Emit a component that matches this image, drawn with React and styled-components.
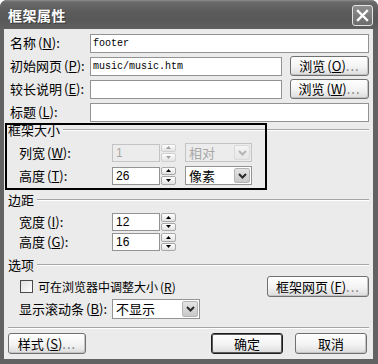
import React from 'react';
import styled, { createGlobalStyle } from 'styled-components';

const GlobalStyle = createGlobalStyle`
  html, body { margin: 0; padding: 0; background: #ffffff; }
  body { font-family: "Noto Sans CJK SC", "Noto Sans", sans-serif; color: #000; }
  * { box-sizing: border-box; }
`;

const Window = styled.div`
  width: 378px;
  height: 364px;
  display: flex;
  flex-direction: column;
  background: #626262;
  border-radius: 7px 7px 0 0;
  overflow: hidden;
`;

const TitleBar = styled.div`
  height: 29px;
  flex: none;
  display: flex;
  align-items: center;
  justify-content: space-between;
  padding: 1px 5px 0 8px;
  background: linear-gradient(#8c8c8c 0px, #6a6a6a 2px, #5b5b5b 40%, #585858 70%, #606060 100%);
`;

const Title = styled.div`
  color: #fff;
  font-size: 14px;
  font-weight: 700;
  line-height: 16px;
  letter-spacing: 0.5px;
  text-shadow: 1px 1px 0 #3a3a3a;
`;

const CloseButton = styled.div`
  width: 21px;
  height: 21px;
  border: 1px solid #e4e4e4;
  border-radius: 3px;
  background: linear-gradient(#8e8e8e, #6c6c6c);
  display: flex;
  align-items: center;
  justify-content: center;
`;

const Body = styled.div`
  flex: 1;
  margin: 0 5px 5px 4px;
  background: #ebebeb;
  padding: 4px 4px 0 4px;
  display: flex;
  flex-direction: column;
  font-size: 13px;
  line-height: 14px;
`;

const Fields = styled.div`
  display: flex;
  flex-direction: column;
  gap: 3px;
`;

const FieldRow = styled.div`
  display: flex;
  align-items: center;
  height: 20px;
`;

const Label = styled.div`
  width: ${p => p.$w}px;
  flex: none;
  padding-left: 2px;
  white-space: nowrap;
`;

const Paren = styled.span`
  margin-left: 2px;
  & u { text-underline-offset: 1px; }
`;

const TextInput = styled.div`
  flex: 1;
  height: 19px;
  border: 1px solid #939393;
  background: #fff;
  font-family: "Liberation Mono", "DejaVu Sans Mono", monospace;
  font-size: 10px;
  line-height: 17px;
  padding: 0 2px;
  white-space: nowrap;
`;

const Button = styled.div`
  width: ${p => p.$w}px;
  height: ${p => p.$h || 21}px;
  flex: none;
  margin-left: ${p => p.$ml || 0}px;
  display: flex;
  align-items: center;
  justify-content: center;
  white-space: nowrap;
  border: 1px solid ${p => (p.$default ? '#1e1e1e' : '#707070')};
  border-radius: 3px;
  background: linear-gradient(#ffffff, #f3f3f3 55%, #dcdcdc);
  box-shadow: ${p => (p.$default
    ? 'inset 0 0 0 1px #5a5a5a'
    : 'inset -1px -1px 0 #c4c4c4')};
  font-size: 13px;
  line-height: 14px;
`;

const Dots = styled.span`
  color: #7a7a7a;
  letter-spacing: 1px;
`;

const Section = styled.section`
  position: relative;
  margin-top: ${p => p.$mt}px;
  display: flex;
  flex-direction: column;
`;

const SectionHeader = styled.div`
  display: flex;
  align-items: center;
  height: 14px;
  margin-bottom: ${p => p.$mb}px;
`;

const Rule = styled.div`
  flex: 1;
  margin-left: 3px;
  border-top: 1px solid #a6a6a6;
  border-bottom: 1px solid #ffffff;
`;

const Highlight = styled.div`
  position: absolute;
  left: -3px;
  top: 0;
  width: 262px;
  height: 67px;
  border: 2px solid #000;
  pointer-events: none;
`;

const SubRows = styled.div`
  display: flex;
  flex-direction: column;
  gap: ${p => p.$gap}px;
`;

const SubRow = styled.div`
  display: flex;
  align-items: center;
  height: ${p => p.$h}px;
  padding-left: ${p => p.$pl || 9}px;
`;

const CheckText = styled.span`
  font-size: 12px;
  white-space: nowrap;
`;

const SpinInput = styled.div`
  width: 48px;
  height: 18px;
  flex: none;
  border: 1px solid ${p => (p.$disabled ? '#c4c4c4' : '#939393')};
  background: ${p => (p.$disabled ? '#ececec' : '#fff')};
  color: ${p => (p.$disabled ? '#a8a8a8' : '#000')};
  font-family: "Liberation Sans", Arial, sans-serif;
  font-size: 12px;
  line-height: 16px;
  padding: 0 3px;
`;

const Spinner = styled.div`
  width: 16px;
  height: 18px;
  flex: none;
  display: flex;
  flex-direction: column;
  gap: 1px;
  padding-left: 1px;
`;

const SpinButton = styled.div`
  flex: 1;
  border: 1px solid ${p => (p.$disabled ? '#d0d0d0' : '#a9a9a9')};
  border-radius: 2px;
  background: linear-gradient(#ffffff, #e2e2e2);
  display: flex;
  align-items: center;
  justify-content: center;
`;

const Select = styled.div`
  width: ${p => p.$w}px;
  height: ${p => p.$h || 19}px;
  flex: none;
  margin-left: ${p => p.$ml || 0}px;
  display: flex;
  align-items: center;
  justify-content: space-between;
  border: 1px solid ${p => (p.$disabled ? '#c4c4c4' : '#939393')};
  background: ${p => (p.$disabled ? '#ececec' : '#fff')};
  color: ${p => (p.$disabled ? '#a8a8a8' : '#000')};
  padding: 1px 1px 1px 3px;
  white-space: nowrap;
`;

const DropButton = styled.div`
  width: 16px;
  height: 100%;
  border: 1px solid ${p => (p.$disabled ? '#dadada' : '#b4b4b4')};
  border-radius: 2px;
  background: ${p => (p.$disabled
    ? 'linear-gradient(#f4f4f4, #e6e6e6)'
    : 'linear-gradient(#e4e4e4, #c9c9c9)')};
  display: flex;
  align-items: center;
  justify-content: center;
`;

const Checkbox = styled.div`
  width: 13px;
  height: 13px;
  flex: none;
  border: 1px solid #4a4a4a;
  background: linear-gradient(135deg, #e0e0e0, #ffffff);
  margin-right: 5px;
`;

const Spacer = styled.div`
  flex: 1;
`;

const Separator = styled.div`
  margin-top: 8px;
  border-top: 1px solid #a6a6a6;
  border-bottom: 1px solid #ffffff;
`;

const Footer = styled.div`
  display: flex;
  align-items: center;
  height: 21px;
  margin-top: 4px;
  padding-right: 2px;
  gap: 12px;
`;

const Mnemonic = ({ k }) => (
  <Paren>(<u>{k}</u>)</Paren>
);

const Arrow = ({ up, disabled }) => (
  <svg width="5" height="3" viewBox="0 0 5 3">
    <path d={up ? 'M0 3 L2.5 0 L5 3 Z' : 'M0 0 L2.5 3 L5 0 Z'} fill={disabled ? '#a0a0a0' : '#000'} />
  </svg>
);

const Spin = ({ value, disabled }) => (
  <>
    <SpinInput $disabled={disabled}>{value}</SpinInput>
    <Spinner>
      <SpinButton $disabled={disabled}><Arrow up disabled={disabled} /></SpinButton>
      <SpinButton $disabled={disabled}><Arrow disabled={disabled} /></SpinButton>
    </Spinner>
  </>
);

const Chevron = ({ disabled }) => (
  <svg width="9" height="6" viewBox="0 0 9 6">
    <path d="M1 1 L4.5 4.5 L8 1" fill="none" stroke={disabled ? '#b4b4b4' : '#2a2a2a'} strokeWidth="2" />
  </svg>
);

const Dropdown = ({ text, w, h, ml, disabled }) => (
  <Select $w={w} $h={h} $ml={ml} $disabled={disabled}>
    <span>{text}</span>
    <DropButton $disabled={disabled}><Chevron disabled={disabled} /></DropButton>
  </Select>
);

export default function App() {
  return (
    <>
      <GlobalStyle />
      <Window>
        <TitleBar>
          <Title>框架属性</Title>
          <CloseButton>
            <svg width="13" height="13" viewBox="0 0 13 13">
              <path d="M2 2 L11 11 M11 2 L2 11" stroke="#fff" strokeWidth="2.4" strokeLinecap="square" />
            </svg>
          </CloseButton>
        </TitleBar>
        <Body>
          <Fields>
            <FieldRow>
              <Label $w={82}>名称<Mnemonic k="N" />:</Label>
              <TextInput>footer</TextInput>
            </FieldRow>
            <FieldRow>
              <Label $w={82}>初始网页<Mnemonic k="P" />:</Label>
              <TextInput>music/music.htm</TextInput>
              <Button $w={79} $h={20} $ml={8}>浏览<Mnemonic k="O" /><Dots>...</Dots></Button>
            </FieldRow>
            <FieldRow>
              <Label $w={82}>较长说明<Mnemonic k="E" />:</Label>
              <TextInput />
              <Button $w={79} $h={20} $ml={8}>浏览<Mnemonic k="W" /><Dots>...</Dots></Button>
            </FieldRow>
            <FieldRow>
              <Label $w={82}>标题<Mnemonic k="L" />:</Label>
              <TextInput />
            </FieldRow>
          </Fields>

          <Section $mt={1}>
            <Highlight />
            <SectionHeader $mb={6}>框架大小<Rule /></SectionHeader>
            <SubRows $gap={4}>
              <SubRow $h={19}>
                <Label $w={95}>列宽<Mnemonic k="W" />:</Label>
                <Spin value="1" disabled />
                <Dropdown text="相对" w={67} ml={9} disabled />
              </SubRow>
              <SubRow $h={19}>
                <Label $w={95}>高度<Mnemonic k="T" />:</Label>
                <Spin value="26" />
                <Dropdown text="像素" w={67} ml={9} />
              </SubRow>
            </SubRows>
          </Section>

          <Section $mt={8}>
            <SectionHeader $mb={6}>边距<Rule /></SectionHeader>
            <SubRows $gap={2}>
              <SubRow $h={18}>
                <Label $w={95}>宽度<Mnemonic k="I" />:</Label>
                <Spin value="12" />
              </SubRow>
              <SubRow $h={18}>
                <Label $w={95}>高度<Mnemonic k="G" />:</Label>
                <Spin value="16" />
              </SubRow>
            </SubRows>
          </Section>

          <Section $mt={7}>
            <SectionHeader $mb={4}>选项<Rule /></SectionHeader>
            <SubRows $gap={2}>
              <SubRow $h={21} $pl={12}>
                <Checkbox />
                <CheckText>可在浏览器中调整大小<Mnemonic k="R" /></CheckText>
                <Spacer />
                <Button $w={102}>框架网页<Mnemonic k="F" /><Dots>...</Dots></Button>
              </SubRow>
              <SubRow $h={20}>
                <Label $w={95}>显示滚动条<Mnemonic k="B" />:</Label>
                <Dropdown text="不显示" w={88} h={20} />
              </SubRow>
            </SubRows>
          </Section>

          <Separator />
          <Footer>
            <Button $w={78}>样式<Mnemonic k="S" /><Dots>...</Dots></Button>
            <Spacer />
            <Button $w={72} $default>确定</Button>
            <Button $w={72}>取消</Button>
          </Footer>
        </Body>
      </Window>
    </>
  );
}
